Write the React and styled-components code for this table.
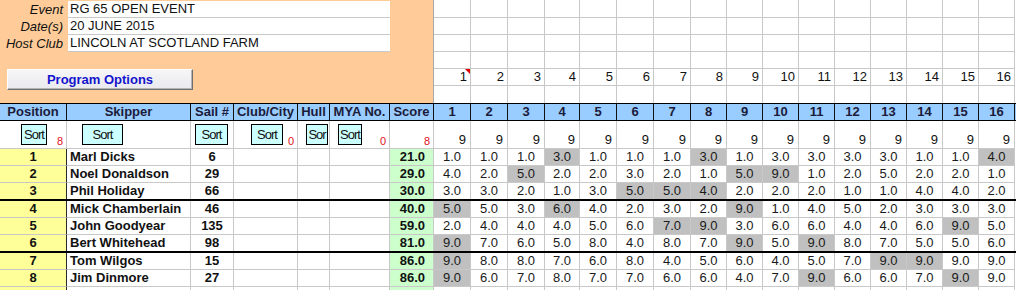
import React from 'react'
import styled, { createGlobalStyle } from 'styled-components'

const GlobalStyle = createGlobalStyle`
  html, body {
    margin: 0;
    padding: 0;
    background: #fff;
    overflow: hidden;
  }
  body {
    font-family: 'Liberation Sans', Arial, sans-serif;
    font-size: 13px;
    color: #111;
  }
`

const GRID = '#c8c8c8'
const RACE_W = [37, 37, 37, 35, 37, 37, 37, 36, 36, 36, 36, 36, 36, 36, 36, 36]
const RACE_COLS = RACE_W.map((w) => w + 'px').join(' ')
const COLS = `67px 124px 43px 64px 32px 60px 44px ${RACE_COLS}`

// * marks a discarded (grey) race score
const results = [
    { pos: 1, name: 'Marl Dicks', sail: 6, score: '21.0', races: '1 1 1 3* 1 1 1 3* 1 3 3 3 3 1 1 4*' },
    { pos: 2, name: 'Noel Donaldson', sail: 29, score: '29.0', races: '4 2 5* 2 2 3 2 1 5* 9* 1 2 5 2 2 1' },
    { pos: 3, name: 'Phil Holiday', sail: 66, score: '30.0', races: '3 3 2 1 3 5* 5* 4* 2 2 2 1 1 4 4 2', thick: true },
    { pos: 4, name: 'Mick Chamberlain', sail: 46, score: '40.0', races: '5* 5 3 6* 4 2 3 2 9* 1 4 5 2 3 3 3' },
    { pos: 5, name: 'John Goodyear', sail: 135, score: '59.0', races: '2 4 4 4 5 6 7* 9* 3 6 6 4 4 6 9* 5' },
    { pos: 6, name: 'Bert Whitehead', sail: 98, score: '81.0', races: '9* 7 6 5 8 4 8 7 9* 5 9* 8 7 5 5 6', thick: true },
    { pos: 7, name: 'Tom Wilgos', sail: 15, score: '86.0', races: '9* 8 8 7 6 8 4 5 6 4 5 7 9* 9* 9 9' },
    { pos: 8, name: 'Jim Dinmore', sail: 27, score: '86.0', races: '9* 6 7 8 7 7 6 6 4 7 9* 6 6 7 9* 9' },
]

const races = RACE_W.map((_, i) => i + 1)

function App() {
    return (
        <Page>
            <GlobalStyle />
            <Top>
                <EventPanel>
                    <InfoGrid>
                        <InfoLabel>Event</InfoLabel>
                        <InfoValue>RG 65 OPEN EVENT</InfoValue>
                        <InfoLabel>Date(s)</InfoLabel>
                        <InfoValue>20 JUNE 2015</InfoValue>
                        <InfoLabel>Host Club</InfoLabel>
                        <InfoValue>LINCOLN AT SCOTLAND FARM</InfoValue>
                    </InfoGrid>
                    <OptionsButton>Program Options</OptionsButton>
                </EventPanel>
                <TopGrid>
                    {[0, 1, 2, 3, 4, 5].map((r) =>
                        races.map((n) => (
                            <GridCell key={r + '-' + n} $last={r === 5} $note={r === 4 && n === 1}>
                                {r === 4 ? n : ''}
                            </GridCell>
                        ))
                    )}
                </TopGrid>
            </Top>

            <HeadRow>
                <HeadCell>Position</HeadCell>
                <HeadCell>Skipper</HeadCell>
                <HeadCell>Sail #</HeadCell>
                <HeadCell>Club/City</HeadCell>
                <HeadCell>Hull</HeadCell>
                <HeadCell>MYA No.</HeadCell>
                <HeadCell>Score</HeadCell>
                {races.map((n) => (
                    <HeadCell key={n}>{n}</HeadCell>
                ))}
            </HeadRow>

            <SortRow>
                <SortCell>
                    <SortButton $w={26} $offset={21}>Sort</SortButton>
                    <Count>8</Count>
                </SortCell>
                <SortCell>
                    <SortButton $w={41} $offset={15}>Sort</SortButton>
                </SortCell>
                <SortCell>
                    <SortButton $w={33} $offset={4}>Sort</SortButton>
                </SortCell>
                <SortCell>
                    <SortButton $w={32} $offset={17}>Sort</SortButton>
                    <Count>0</Count>
                </SortCell>
                <SortCell>
                    <SortButton $w={22} $offset={8}>Sor</SortButton>
                </SortCell>
                <SortCell>
                    <SortButton $w={24} $offset={8}>Sort</SortButton>
                    <Count>0</Count>
                </SortCell>
                <SortCell>
                    <Count>8</Count>
                </SortCell>
                {races.map((n) => (
                    <SortCell key={n} $race>9</SortCell>
                ))}
            </SortRow>

            {results.map((r) => (
                <DataRow key={r.pos} $thick={r.thick}>
                    <PosCell>{r.pos}</PosCell>
                    <NameCell>{r.name}</NameCell>
                    <SailCell>{r.sail}</SailCell>
                    <EmptyCell />
                    <EmptyCell />
                    <EmptyCell />
                    <ScoreCell>{r.score}</ScoreCell>
                    {r.races.split(' ').map((v, i) => {
                        const drop = v.endsWith('*')
                        return (
                            <RaceCell key={i} $drop={drop}>
                                {parseFloat(v).toFixed(1)}
                            </RaceCell>
                        )
                    })}
                </DataRow>
            ))}
            <DataRow>
                <PosCell />
                <NameCell />
                <SailCell />
                <EmptyCell />
                <EmptyCell />
                <EmptyCell />
                <ScoreCell />
                {races.map((n) => (
                    <RaceCell key={n} />
                ))}
            </DataRow>
        </Page>
    )
}

const Page = styled.div`
    width: 1016px;
    height: 290px;
    overflow: hidden;
`

const Top = styled.div`
    display: flex;
    height: 103px;
`

const EventPanel = styled.div`
    box-sizing: border-box;
    width: 434px;
    flex: none;
    background: #ffcc99;
    border-right: 1px solid #a8a8a8;
    padding-top: 1px;
`

const InfoGrid = styled.div`
    display: grid;
    grid-template-columns: 68px 322px;
    grid-auto-rows: 17px;
`

const InfoLabel = styled.div`
    font-style: italic;
    text-align: right;
    padding-right: 5px;
    line-height: 17px;
    color: #111;
`

const InfoValue = styled.div`
    box-sizing: border-box;
    background: #fff;
    border-bottom: 1px solid ${GRID};
    padding-left: 2px;
    line-height: 16px;
    color: #111;
`

const OptionsButton = styled.div`
    box-sizing: border-box;
    width: 186px;
    height: 21px;
    margin: 17px 0 0 7px;
    background: linear-gradient(#f6f6f8, #e9e9ee);
    border: 1px solid;
    border-color: #fdfdfd #6e6e6e #6e6e6e #fdfdfd;
    box-shadow: inset -1px -1px 0 #b4b4b4;
    color: #1414cc;
    font-weight: bold;
    font-size: 13px;
    display: flex;
    align-items: center;
    justify-content: center;
`

const TopGrid = styled.div`
    display: grid;
    grid-template-columns: ${RACE_COLS};
    grid-template-rows: 18px 17px 17px 17px 17px 17px;
`

const GridCell = styled.div`
    position: relative;
    box-sizing: border-box;
    border-right: 1px solid ${GRID};
    border-bottom: ${(p) => (p.$last ? 'none' : `1px solid ${GRID}`)};
    text-align: right;
    padding-right: 3px;
    line-height: 16px;
    color: #111;

    &::after {
        content: '';
        display: ${(p) => (p.$note ? 'block' : 'none')};
        position: absolute;
        top: 0;
        right: 0;
        border-top: 5px solid #e00000;
        border-left: 5px solid transparent;
    }
`

const Row = styled.div`
    display: grid;
    grid-template-columns: ${COLS};
`

const HeadRow = styled(Row)`
    height: 18px;
    box-sizing: border-box;
    border-top: 1px solid #000;
    border-bottom: 1px solid #000;
    background: #99ccff;
`

const HeadCell = styled.div`
    box-sizing: border-box;
    border-right: 1px solid #111;
    font-weight: bold;
    color: #1b1b3a;
    text-align: center;
    line-height: 16px;
    white-space: nowrap;
    overflow: hidden;
`

const SortRow = styled(Row)`
    height: 28px;
`

const SortCell = styled.div`
    box-sizing: border-box;
    display: flex;
    justify-content: ${(p) => (p.$race ? 'flex-end' : 'flex-start')};
    align-items: ${(p) => (p.$race ? 'flex-end' : 'flex-start')};
    padding: ${(p) => (p.$race ? '0 4px 0 0' : '3px 0 0 0')};
    border-right: 1px solid ${GRID};
    border-bottom: 1px solid ${GRID};
    overflow: hidden;
    line-height: 16px;
    color: #111;
`

const SortButton = styled.div`
    box-sizing: border-box;
    flex: none;
    width: ${(p) => p.$w}px;
    height: 21px;
    margin-left: ${(p) => p.$offset}px;
    background: #ccffff;
    border: 1px solid #000;
    font-size: 13px;
    letter-spacing: -1px;
    color: #111;
    display: flex;
    align-items: center;
    justify-content: center;
    overflow: hidden;
    white-space: nowrap;
`

const Count = styled.div`
    margin-left: auto;
    align-self: flex-end;
    padding-right: 3px;
    font-size: 11px;
    line-height: 13px;
    color: #e0101c;
`

const DataRow = styled(Row)`
    height: ${(p) => (p.$thick ? 18 : 17)}px;
    box-sizing: border-box;
    border-bottom: ${(p) => (p.$thick ? '2px solid #000' : 'none')};

    & > div {
        border-bottom: ${(p) => (p.$thick ? 'none' : `1px solid ${GRID}`)};
    }
`

const Cell = styled.div`
    box-sizing: border-box;
    border-right: 1px solid ${GRID};
    line-height: 16px;
    white-space: nowrap;
    overflow: hidden;
    color: #111;
`

const PosCell = styled(Cell)`
    background: #ffff99;
    border-right-color: #2a2a2a;
    text-align: center;
    font-weight: bold;
`

const NameCell = styled(Cell)`
    padding-left: 3px;
    font-weight: bold;
`

const SailCell = styled(Cell)`
    text-align: center;
    font-weight: bold;
`

const EmptyCell = styled(Cell)``

const ScoreCell = styled(Cell)`
    background: #ccffcc;
    text-align: right;
    padding-right: 8px;
    font-weight: bold;
`

const RaceCell = styled(Cell)`
    background: ${(p) => (p.$drop ? '#c0c0c0' : '#fff')};
    text-align: center;
    color: #1a1a1a;
`

export default App
